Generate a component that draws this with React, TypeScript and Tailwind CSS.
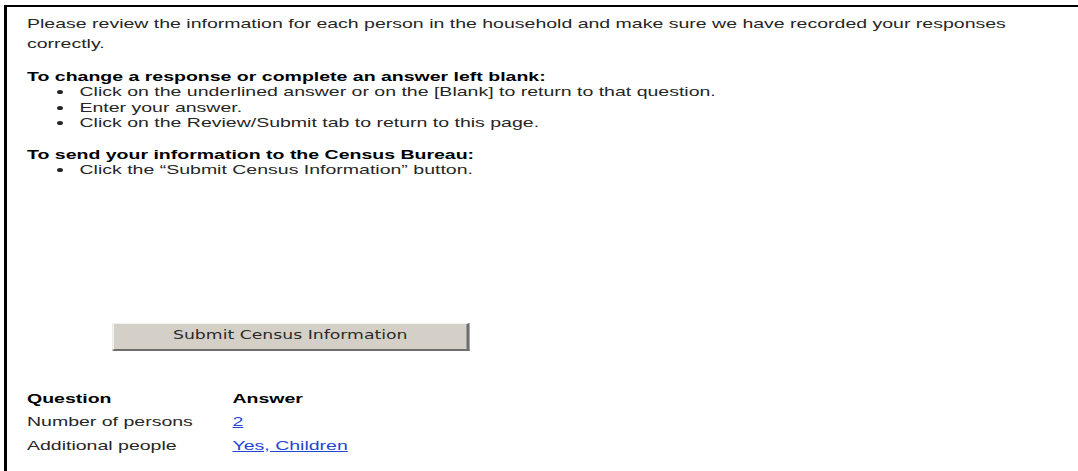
import React from "react";

interface Row {
  question: string;
  answer: string;
}

const rows: Row[] = [
  { question: "Number of persons", answer: "2" },
  { question: "Additional people", answer: "Yes, Children" },
];

const changeSteps = [
  "Click on the underlined answer or on the [Blank] to return to that question.",
  "Enter your answer.",
  "Click on the Review/Submit tab to return to this page.",
];

export default function App() {
  return (
    <div className="min-h-[471px] w-[1078px] overflow-hidden bg-white pt-[5px] pl-[4px]">
      <div className="min-h-[466px] border-t-2 border-l-[3px] border-black pt-[7px] pl-[20px]">
        {/* page text is drawn wide, so the column is stretched from the left edge */}
        <div
          className="w-[690px] origin-left scale-x-150 text-[13px] text-[#262626]"
          style={{ fontFamily: '"Liberation Sans", Arial, sans-serif' }}
        >
          <p className="leading-[20px]">
            Please review the information for each person in the household and make sure we have recorded your
            responses correctly.
          </p>

          <div className="mt-[14.5px] leading-[15.5px]">
            <p className="font-bold text-black">To change a response or complete an answer left blank:</p>
            <ul className="list-disc pl-[35px]">
              {changeSteps.map((step) => (
                <li key={step}>{step}</li>
              ))}
            </ul>
          </div>

          <div className="mt-[16px] leading-[15.5px]">
            <p className="font-bold text-black">To send your information to the Census Bureau:</p>
            <ul className="list-disc pl-[35px]">
              <li>Click the “Submit Census Information” button.</li>
            </ul>
          </div>

          <div className="mt-[145px] pl-[57px]">
            <button
              type="button"
              className="h-[28px] w-[238px] border-t border-l border-t-[#f4f2ee] border-l-[#f4f2ee] border-b-2 border-r-2 border-b-[#6e6e6e] border-r-[#6e6e6e] bg-[#d4d0c8] text-[11.5px] text-[#2a2a2a]"
              style={{ fontFamily: '"DejaVu Sans", Tahoma, sans-serif' }}
            >
              Submit Census Information
            </button>
          </div>

          <div className="mt-[36px] grid grid-cols-[137px_1fr] leading-[23.5px]">
            <div className="font-bold text-black">Question</div>
            <div className="font-bold text-black">Answer</div>
            {rows.map((row) => (
              <React.Fragment key={row.question}>
                <div>{row.question}</div>
                <div>
                  <a href="#" className="text-[#2445d4] underline">
                    {row.answer}
                  </a>
                </div>
              </React.Fragment>
            ))}
          </div>
        </div>
      </div>
    </div>
  );
}
